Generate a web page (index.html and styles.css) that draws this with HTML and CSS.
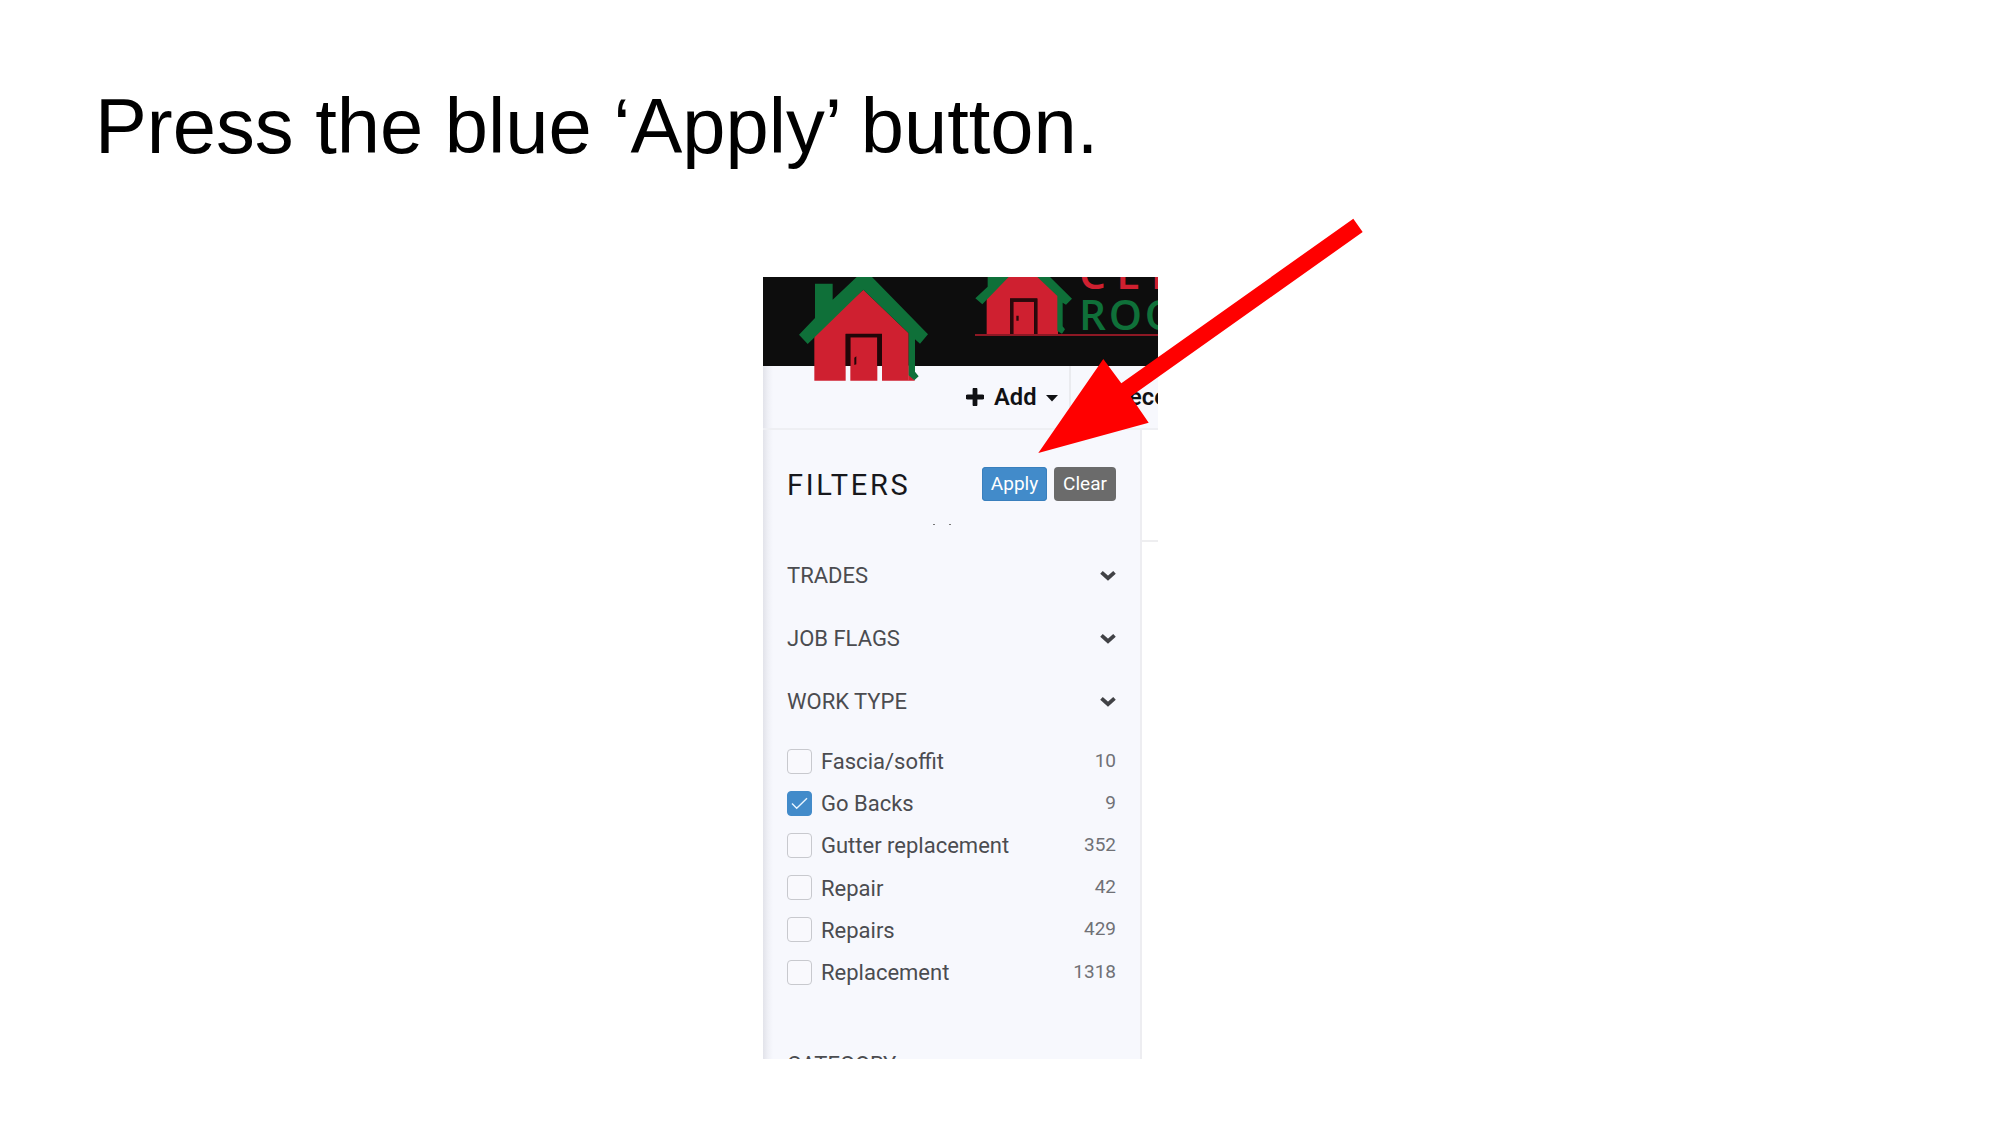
FILE: index.html
```html
<!DOCTYPE html>
<html lang="en">
<head>
<meta charset="utf-8">
<title>Press the blue ‘Apply’ button.</title>
<link rel="stylesheet" href="styles.css">
</head>
<body>
<main class="slide">
  <h1 class="title">Press the blue ‘Apply’ button.</h1>
  <section class="app">
    <header class="brand">
      <svg class="logos" viewBox="39 36 1185 330" width="395" height="110">
        <g fill="#cf2030">
          <path d="M340 74 L476 205 V347 H396 V207 H287 V347 H193 V205 Z"/>
          <path d="M301 217 H382 V347 H301 Z"/>
          <path d="M475 300 H484 V334 L495 347 H475 Z"/>
        </g>
        <path fill="#210608" d="M287 206 H396 V303 H382 V217 H301 V303 H287 Z M313 278 L319 274 V298 L313 300 Z"/>
        <path fill="#0f7039" d="M195 56 H248 V104 L320 36 H366 L534 208 L510 236 L495 223 V320 L506 334 L493 346 L476 331 V205 L340 74 L173 237 L147 209 L195 159 Z"/>
        <path fill="#cf2030" d="M772 36 H866 L924 91 V207 H862 V101 H781 V207 H710 V96 Z M790 110 H852 V207 H790 Z"/>
        <path fill="#2a080b" d="M780 100 H862 V207 H853 V110 H790 V207 H780 Z M799 152 H806 V167 H799 Z"/>
        <path fill="#0f7039" d="M713 36 H776 L697 118 L676 100 L713 65 Z M862 36 H900 L966 101 L948 119 L938 113 V184 L945 193 L936 206 L922 198 V93 Z"/>
        <rect x="675" y="207" width="549" height="6" fill="#8d1824"/>
        <g class="wordmark">
          <text x="987 1099 1202" y="73" fill="#cf2030">CLE</text>
          <text x="987 1076 1184" y="194" fill="#0f7039">ROO</text>
        </g>
      </svg>
    </header>
    <nav class="toolbar">
      <div class="add">
        <svg width="18" height="18" viewBox="0 0 18 18"><path d="M9 1.5V16.5M1.500 9H16.500" stroke="#101114" stroke-width="4.800" stroke-linecap="round"/></svg>
        <span>Add</span>
        <svg class="caret" width="12" height="7" viewBox="0 0 12 7"><path d="M0 0H12L6 6.500Z" fill="#101114"/></svg>
      </div>
      <div class="recent">Recent</div>
    </nav>
    <div class="content">
      <aside class="filters">
        <div class="heading">
          <h2>FILTERS</h2>
          <button class="btn apply">Apply</button>
          <button class="btn clear">Clear</button>
        </div>
        <div class="specks"><i></i><i></i></div>
        <div class="group"><span>TRADES</span><svg class="chevron" viewBox="0 0 16 11"><path d="M1.500 2.300L8 8.200L14.500 2.300"/></svg></div>
        <div class="group"><span>JOB FLAGS</span><svg class="chevron" viewBox="0 0 16 11"><path d="M1.500 2.300L8 8.200L14.500 2.300"/></svg></div>
        <div class="group"><span>WORK TYPE</span><svg class="chevron" viewBox="0 0 16 11"><path d="M1.500 2.300L8 8.200L14.500 2.300"/></svg></div>
        <ul class="options">
          <li><b class="box"></b><span>Fascia/soffit</span><em>10</em></li>
          <li><b class="box checked"><svg width="17" height="13" viewBox="0 0 17 13"><path d="M1 6.500L5.700 11.300L16 1.200"/></svg></b><span>Go Backs</span><em>9</em></li>
          <li><b class="box"></b><span>Gutter replacement</span><em>352</em></li>
          <li><b class="box"></b><span>Repair</span><em>42</em></li>
          <li><b class="box"></b><span>Repairs</span><em>429</em></li>
          <li><b class="box"></b><span>Replacement</span><em>1318</em></li>
        </ul>
        <div class="group category"><span>CATEGORY</span></div>
      </aside>
      <div class="page"></div>
    </div>
  </section>
  <svg class="arrow" width="326" height="236" viewBox="1038 218 326 236"><path fill="#f00" d="M1038.300 453L1103.300 359L1121.300 383.300L1353.300 218.700L1362.700 232L1130.700 396.600L1148.700 422.700Z"/></svg>
</main>
</body>
</html>
```
FILE: styles.css
```css
* { box-sizing: border-box; }
body { margin: 0; background: #fff; font-family: Roboto, sans-serif; }
.slide { position: relative; width: 2000px; height: 1125px; overflow: hidden; }
.title {
  margin: 0;
  height: 277px;
  padding: 81px 0 0 95px;
  font: 400 77.7px/90px "Liberation Sans", Arial, sans-serif;
  color: #000;
}
.app { width: 395px; height: 782px; margin-left: 763px; overflow: hidden; display: flex; flex-direction: column; }
.brand { height: 89px; background: #0d0d0d; flex: none; }
.logos { display: block; position: relative; z-index: 1; }
.wordmark { font: 600 127px "Open Sans", sans-serif; }
.toolbar { height: 64px; flex: none; display: flex; background: #f7f8fd; border-bottom: 2px solid #eeeff3; color: #101114; font-size: 23.7px; font-weight: 600; line-height: 62px; }
.add { width: 308px; flex: none; padding-left: 203px; display: flex; align-items: center; gap: 10px; border-right: 2px solid #eaebef; }
.add .caret { margin-top: 3px; }
.recent { padding-left: 43px; white-space: nowrap; }
.toolbar, .filters { background-image: linear-gradient(90deg, #e2e3ea, #eff0f6 5px, #f7f8fd 10px); }
.content { flex: 1; display: flex; min-height: 0; }
.filters { width: 379px; flex: none; padding: 37px 24px 0; border-right: 2px solid #ededf1; background-color: #f7f8fd; overflow: hidden; }
.heading { height: 34px; display: flex; gap: 7px; }
.heading h2 { flex: 1; margin: 0; font-size: 29px; font-weight: 400; line-height: 36px; letter-spacing: 2.7px; color: #17181c; }
.btn { height: 34px; padding: 0; border: 0; border-radius: 4px; color: #fff; font: 400 19px/34px Roboto, sans-serif; }
.apply { width: 65px; background: #428bca; box-shadow: inset 0 0 0 1px #397fbd; }
.clear { width: 62px; background: #6b6b6b; }
.specks { height: 43px; padding: 23px 0 0 146px; display: flex; gap: 14px; }
.specks i { width: 2px; height: 1px; background: #777; }
.group { height: 63px; display: flex; align-items: center; justify-content: space-between; font-size: 22px; color: #4b4c50; }
.chevron { width: 16px; height: 11px; fill: none; stroke: #414246; stroke-width: 3.8; }
.options { list-style: none; margin: 7px 0 0; padding: 0; }
.options li { height: 42.2px; display: flex; align-items: center; gap: 9px; color: #4b4c50; font-size: 22px; }
.options span { flex: 1; padding-top: 1px; }
.options em { font-style: normal; font-size: 19px; color: #707176; padding-bottom: 2px; }
.box { width: 25px; height: 25px; display: grid; place-items: center; border: 1px solid #c8c9ce; border-radius: 4px; background: #f9f9fd; }
.checked { background: #428bca; border-color: #428bca; }
.checked path { fill: none; stroke: #e8f5ff; stroke-width: 1.4; }
.category { margin-top: 40px; }
.page { flex: 1; height: 112px; border-bottom: 2px solid #eeeef0; background: #fff; }
.arrow { position: absolute; left: 1038px; top: 218px; z-index: 2; }
```
